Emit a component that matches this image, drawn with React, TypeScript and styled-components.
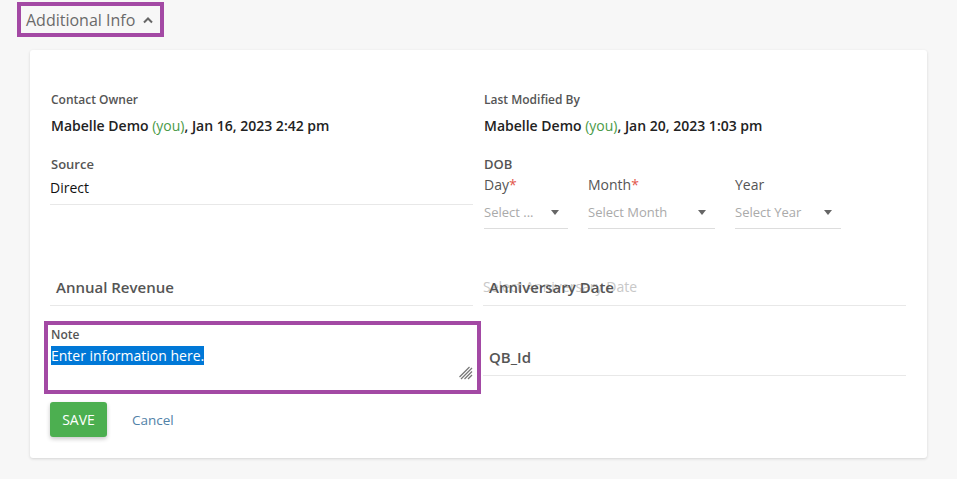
import React from "react";
import styled, { createGlobalStyle } from "styled-components";

const Global = createGlobalStyle`
  html, body { margin: 0; padding: 0; background: #f7f7f7; }
  body { font-family: "Open Sans", "Liberation Sans", sans-serif; color: #222; }
  * { box-sizing: border-box; }
`;

const Page = styled.div`
  padding: 2px 0 20px 17px;
`;

const HeaderBox = styled.div`
  display: inline-flex;
  align-items: center;
  gap: 7px;
  height: 35px;
  padding: 0 6px 0 5px;
  border: 4px solid #a349a4;
  font-size: 16px;
  color: #6a6a6a;
  cursor: pointer;
`;

const Card = styled.div`
  margin: 13px 0 0 13px;
  width: 897px;
  background: #fff;
  border-radius: 3px;
  box-shadow: 0 1px 3px rgba(0, 0, 0, 0.14);
  padding: 43px 21px 21px 21px;
`;

const Row = styled.div<{ $top: number }>`
  display: grid;
  grid-template-columns: 422px 422px;
  column-gap: 11px;
  align-items: start;
  margin-top: ${(p) => p.$top}px;
`;

const InfoLabel = styled.div`
  font-size: 12px;
  font-weight: 600;
  line-height: 14px;
  color: #555;
`;

const InfoValue = styled.div`
  margin-top: 9px;
  font-size: 14px;
  font-weight: 600;
  line-height: 20px;
  color: #222;
`;

const You = styled.span`
  color: #4a9a48;
  font-weight: 400;
`;

const FieldLabel = styled.div`
  font-size: 13px;
  font-weight: 600;
  line-height: 16px;
  color: #555;
`;

const TextValue = styled.div`
  margin-top: 6px;
  margin-left: -1px;
  padding-bottom: 6px;
  font-size: 14px;
  line-height: 20px;
  color: #111;
  border-bottom: 1px solid #e8e8e8;
`;

const DropRow = styled.div`
  display: flex;
  gap: 20px;
  margin-top: 4px;
`;

const DropCol = styled.div<{ $w: number }>`
  width: ${(p) => p.$w}px;
`;

const SubLabel = styled.div`
  font-size: 14px;
  line-height: 18px;
  color: #555;
`;

const Req = styled.span`
  color: #e2574c;
`;

const SelectBox = styled.div`
  margin-top: 2px;
  height: 33px;
  display: flex;
  align-items: center;
  justify-content: space-between;
  padding-right: 9px;
  border-bottom: 1px solid #ddd;
  font-size: 13px;
  color: #aaa;
`;

const Caret = styled.span`
  width: 0;
  height: 0;
  border-left: 4.5px solid transparent;
  border-right: 4.5px solid transparent;
  border-top: 5px solid #666;
`;

const InputField = styled.div<{ $pt: number }>`
  position: relative;
  margin-left: -1px;
  padding: ${(p) => p.$pt}px 0 8px 0;
  border-bottom: 1px solid #e8e8e8;
  height: ${(p) => p.$pt + 29}px;
`;

const InputLabel = styled.div`
  padding-left: 6px;
  font-size: 15px;
  font-weight: 600;
  line-height: 20px;
  color: #555;
`;

const Placeholder = styled.div`
  font-size: 14px;
  line-height: 20px;
  color: #c8c8c8;
`;

const OverLabel = styled(InputLabel)`
  position: absolute;
  left: 0;
`;

const NoteBox = styled.div`
  position: relative;
  margin: 0 -8px 0 -7px;
  height: 73px;
  border: 4px solid #a349a4;
  padding: 3px 0 0 3px;
`;

const NoteLabel = styled.div`
  font-size: 12px;
  font-weight: 600;
  line-height: 14px;
  color: #555;
`;

const NoteText = styled.div`
  margin-top: 5px;
  font-size: 14px;
  line-height: 18px;
`;

const Selected = styled.span`
  background: #0078d7;
  color: #fff;
`;

const Grip = styled.svg`
  position: absolute;
  right: 4px;
  bottom: 10px;
`;

const Actions = styled.div`
  display: flex;
  align-items: center;
  gap: 25px;
  margin-top: 8px;
  margin-left: -1px;
`;

const SaveButton = styled.button`
  width: 57px;
  height: 35px;
  border: none;
  border-radius: 3px;
  background: #4caf50;
  color: #fff;
  font-family: inherit;
  font-size: 14px;
  text-transform: uppercase;
  box-shadow: 0 2px 4px rgba(0, 0, 0, 0.22);
  cursor: pointer;
`;

const CancelLink = styled.a`
  font-size: 13.5px;
  color: #5282a8;
  text-decoration: none;
  cursor: pointer;
`;

export default function App() {
  return (
    <>
      <Global />
      <Page>
        <HeaderBox>
          Additional Info
          <svg width="12" height="8" viewBox="0 0 12 8">
            <polyline points="2,6.5 6,2.5 10,6.5" fill="none" stroke="#666" strokeWidth="2" />
          </svg>
        </HeaderBox>
        <Card>
          <Row $top={0}>
            <div>
              <InfoLabel>Contact Owner</InfoLabel>
              <InfoValue>
                Mabelle Demo <You>(you)</You>, Jan 16, 2023 2:42 pm
              </InfoValue>
            </div>
            <div>
              <InfoLabel>Last Modified By</InfoLabel>
              <InfoValue>
                Mabelle Demo <You>(you)</You>, Jan 20, 2023 1:03 pm
              </InfoValue>
            </div>
          </Row>
          <Row $top={20}>
            <div>
              <FieldLabel>Source</FieldLabel>
              <TextValue>Direct</TextValue>
            </div>
            <div>
              <FieldLabel>DOB</FieldLabel>
              <DropRow>
                <DropCol $w={84}>
                  <SubLabel>
                    Day<Req>*</Req>
                  </SubLabel>
                  <SelectBox>
                    Select ...
                    <Caret />
                  </SelectBox>
                </DropCol>
                <DropCol $w={127}>
                  <SubLabel>
                    Month<Req>*</Req>
                  </SubLabel>
                  <SelectBox>
                    Select Month
                    <Caret />
                  </SelectBox>
                </DropCol>
                <DropCol $w={106}>
                  <SubLabel>Year</SubLabel>
                  <SelectBox>
                    Select Year
                    <Caret />
                  </SelectBox>
                </DropCol>
              </DropRow>
            </div>
          </Row>
          <Row $top={0}>
            <InputField $pt={48}>
              <InputLabel>Annual Revenue</InputLabel>
            </InputField>
            <InputField $pt={48}>
              <Placeholder>Select Anniversary Date</Placeholder>
              <OverLabel style={{ top: 48 }}>Anniversary Date</OverLabel>
            </InputField>
          </Row>
          <Row $top={15}>
            <NoteBox>
              <NoteLabel>Note</NoteLabel>
              <NoteText>
                <Selected>Enter information here.</Selected>
              </NoteText>
              <Grip width="14" height="14" viewBox="0 0 14 14">
                <g stroke="#777" strokeWidth="1.2">
                  <line x1="13" y1="2" x2="2" y2="13" />
                  <line x1="13" y1="5.5" x2="5.5" y2="13" />
                  <line x1="13" y1="9" x2="9" y2="13" />
                  <line x1="10.5" y1="1" x2="0.5" y2="11" />
                </g>
              </Grip>
            </NoteBox>
            <InputField $pt={26}>
              <InputLabel>QB_Id</InputLabel>
            </InputField>
          </Row>
          <Actions>
            <SaveButton>Save</SaveButton>
            <CancelLink>Cancel</CancelLink>
          </Actions>
        </Card>
      </Page>
    </>
  );
}
